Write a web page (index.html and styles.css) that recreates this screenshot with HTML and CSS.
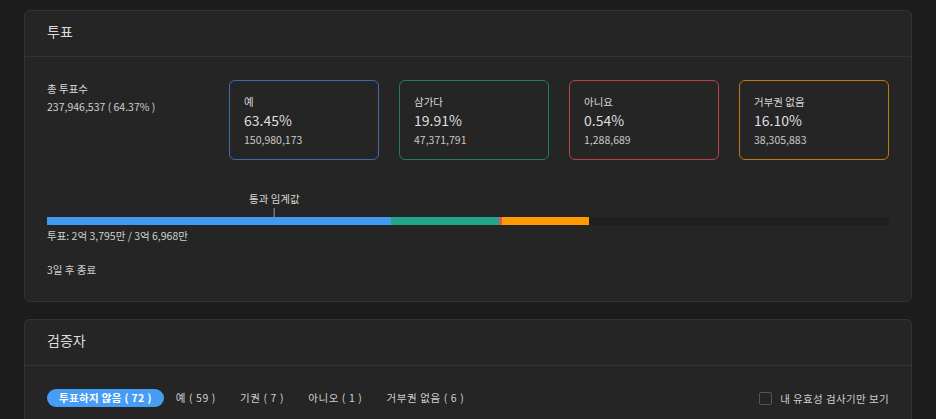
FILE: index.html
```html
<!DOCTYPE html>
<html>
  <head>
    <title>투표</title>
    <meta charset="UTF-8">
    <meta name="viewport" content="width=device-width, initial-scale=1.0">
    <link rel="stylesheet" href="styles.css">
  </head>
  <body>
    <div id="page">
      <div class="card">
        <div class="card-header">투표</div>
        <div class="card-body">
          <div class="summary">
            <div class="total">
              <div class="total-label">총 투표수</div>
              <div class="total-value">237,946,537 ( 64.37% )</div>
            </div>
            <div class="option yes">
              <div class="option-label">예</div>
              <div class="option-pct">63.45%</div>
              <div class="option-count">150,980,173</div>
            </div>
            <div class="option abstain">
              <div class="option-label">삼가다</div>
              <div class="option-pct">19.91%</div>
              <div class="option-count">47,371,791</div>
            </div>
            <div class="option no">
              <div class="option-label">아니요</div>
              <div class="option-pct">0.54%</div>
              <div class="option-count">1,288,689</div>
            </div>
            <div class="option veto">
              <div class="option-label">거부권 없음</div>
              <div class="option-pct">16.10%</div>
              <div class="option-count">38,305,883</div>
            </div>
          </div>

          <div class="tally">
            <div class="threshold" style="left: 27%">
              <span class="threshold-label">통과 임계값</span>
              <span class="threshold-tick"></span>
            </div>
            <div class="bar">
              <div class="seg seg-yes" style="width: 40.84%"></div>
              <div class="seg seg-abstain" style="width: 12.82%"></div>
              <div class="seg seg-no" style="width: 0.35%"></div>
              <div class="seg seg-veto" style="width: 10.36%"></div>
            </div>
            <div class="tally-text">투표: 2억 3,795만 / 3억 6,968만</div>
          </div>

          <div class="ends">3일 후 종료</div>
        </div>
      </div>

      <div class="card">
        <div class="card-header">검증자</div>
        <div class="card-body filters">
          <div class="tabs">
            <div class="tab active">투표하지 않음 ( 72 )</div>
            <div class="tab">예 ( 59 )</div>
            <div class="tab">기권 ( 7 )</div>
            <div class="tab">아니오 ( 1 )</div>
            <div class="tab">거부권 없음 ( 6 )</div>
          </div>
          <label class="mine">
            <span class="checkbox"></span>
            내 유효성 검사기만 보기
          </label>
        </div>
      </div>
    </div>
  </body>
</html>
```

FILE: styles.css
```css
* {
  box-sizing: border-box;
}

html, body {
  margin: 0;
  background-color: #1c1c1c;
  color: #cfcfcf;
  font-family: "Noto Sans CJK KR", "Noto Sans", sans-serif;
}

#page {
  padding: 10px 24px 0 24px;
  display: flex;
  flex-direction: column;
  gap: 17px;
}

.card {
  background-color: #252525;
  border: 1px solid #333;
  border-radius: 5px;
}

.card-header {
  height: 46px;
  padding: 0 22px 5px 22px;
  display: flex;
  align-items: center;
  border-bottom: 1px solid #343434;
  font-size: 14px;
  color: #dcdcdc;
}

.card-body {
  padding: 23px 22px 0 22px;
}

.summary {
  display: flex;
  gap: 20px;
}

.total {
  flex: 1;
  font-size: 10.5px;
  line-height: 18px;
}

.total-label {
  color: #d8d8d8;
}

.option {
  width: 150px;
  height: 80px;
  padding: 13px 14px;
  border: 1px solid;
  border-radius: 6px;
}

.option.yes { border-color: #3c6ea3; }
.option.abstain { border-color: #1f7d68; }
.option.no { border-color: #b8434b; }
.option.veto { border-color: #c27810; }

.option-label {
  font-size: 10.5px;
  line-height: 16px;
  color: #d6d6d6;
}

.option-pct {
  font-size: 14px;
  line-height: 21px;
  color: #dedede;
}

.option-count {
  font-size: 10.5px;
  line-height: 17px;
  color: #c8c8c8;
}

.tally {
  position: relative;
  margin-top: 57px;
}

.threshold {
  position: absolute;
  bottom: 100%;
  display: flex;
  flex-direction: column;
  align-items: center;
  transform: translateX(-50%);
}

.threshold-label {
  font-size: 10.5px;
  line-height: 16px;
  white-space: nowrap;
  color: #d6d6d6;
}

.threshold-tick {
  width: 1px;
  height: 9px;
  margin-top: 1px;
  background-color: #9a9a9a;
}

.bar {
  display: flex;
  height: 8px;
  background-color: #1f1f1f;
}

.seg-yes { background-color: #4299ef; }
.seg-abstain { background-color: #21a68b; }
.seg-no { background-color: #e0525c; }
.seg-veto { background-color: #ff9900; }

.tally-text {
  margin-top: 3px;
  font-size: 10.5px;
  line-height: 16px;
}

.ends {
  margin-top: 18px;
  padding-bottom: 23px;
  font-size: 10.5px;
  line-height: 16px;
}

.filters {
  display: flex;
  align-items: center;
  justify-content: space-between;
  padding-top: 23px;
  padding-bottom: 20px;
}

.tabs {
  display: flex;
  align-items: center;
  gap: 12px;
}

.tab {
  padding: 0 12px 0 0;
  font-size: 10.5px;
  line-height: 18px;
  letter-spacing: 0.6px;
  white-space: nowrap;
  color: #d0d0d0;
}

.tab.active {
  padding: 0 12px;
  border-radius: 9px;
  background-color: #469df3;
  color: #fff;
  font-weight: bold;
  letter-spacing: 0.35px;
}

.mine {
  display: flex;
  align-items: center;
  gap: 8px;
  font-size: 10.5px;
  letter-spacing: 0.4px;
  color: #cfcfcf;
}

.checkbox {
  width: 13px;
  height: 13px;
  border: 1px solid #555;
  border-radius: 2px;
}
```
